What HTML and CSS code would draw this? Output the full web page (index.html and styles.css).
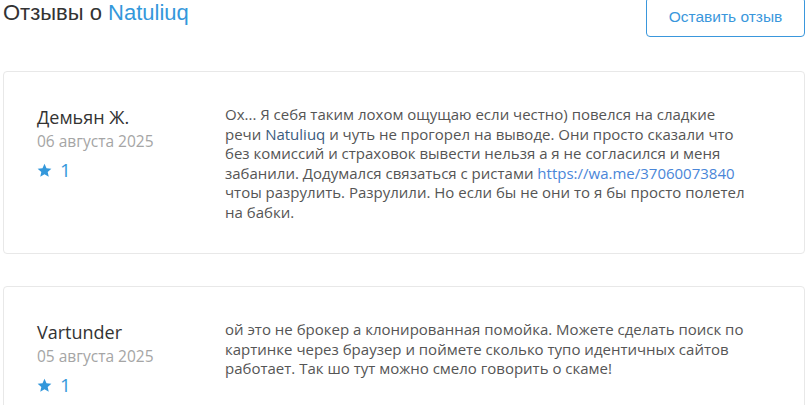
FILE: index.html
```html
<!DOCTYPE html>
<html lang="ru">
<head>
<meta charset="utf-8">
<link rel="stylesheet" href="styles.css">
</head>
<body>
<div class="page">
  <div class="header">
    <h1 class="title">Отзывы о <span class="brand">Natuliuq</span></h1>
    <button class="btn">Оставить отзыв</button>
  </div>
  <div class="review">
    <div class="meta">
      <div class="name">Демьян Ж.</div>
      <div class="date">06 августа 2025</div>
      <div class="rating">
        <svg class="star" viewBox="0 0 24 24" width="15" height="15"><path d="M12 1.2l3.2 7.1 7.8.8-5.9 5.2 1.7 7.7L12 18.1 5.2 22l1.7-7.7L1 9.1l7.8-.8z" fill="#3498db"/></svg>
        <span class="score">1</span>
      </div>
    </div>
    <div class="text">Ох... Я себя таким лохом ощущаю если честно) повелся на сладкие речи <span class="mention">Natuliuq</span> и чуть не прогорел на выводе. Они просто сказали что без комиссий и страховок вывести нельзя а я не согласился и меня забанили. Додумался связаться с ристами <a class="link" href="#">https://wa.me/37060073840</a> чтоы разрулить. Разрулили. Но если бы не они то я бы просто полетел на бабки.</div>
  </div>
  <div class="review">
    <div class="meta">
      <div class="name">Vartunder</div>
      <div class="date">05 августа 2025</div>
      <div class="rating">
        <svg class="star" viewBox="0 0 24 24" width="15" height="15"><path d="M12 1.2l3.2 7.1 7.8.8-5.9 5.2 1.7 7.7L12 18.1 5.2 22l1.7-7.7L1 9.1l7.8-.8z" fill="#3498db"/></svg>
        <span class="score">1</span>
      </div>
    </div>
    <div class="text">ой это не брокер а клонированная помойка. Можете сделать поиск по картинке через браузер и поймете сколько тупо идентичных сайтов работает. Так шо тут можно смело говорить о скаме!</div>
  </div>
</div>
</body>
</html>
```
FILE: styles.css
```css
* { box-sizing: border-box; }
html, body { margin: 0; padding: 0; background: #fff; }
.page {
  padding: 0 1px 0 3px;
  margin-top: -3px;
}
.header {
  display: flex;
  justify-content: space-between;
  align-items: flex-start;
  margin-bottom: 34px;
}
.title {
  margin: 0;
  padding-top: 5px;
  font-family: "Liberation Sans", Arial, sans-serif;
  font-weight: normal;
  font-size: 22px;
  line-height: 22px;
  color: #333;
}
.brand { color: #3498db; }
.btn {
  height: 40px;
  width: 159px;
  background: #fff;
  border: 1px solid #3a97dc;
  border-radius: 4px;
  color: #3a97dc;
  font-family: "Liberation Sans", Arial, sans-serif;
  font-size: 15.5px;
  padding: 0;
}
.review {
  display: grid;
  grid-template-columns: 154px 1fr;
  gap: 34px;
  border: 1px solid #e8e8e8;
  border-radius: 4px;
  padding: 33px 53px 31px 33px;
  margin-bottom: 32px;
}
.name {
  font-family: "Open Sans", sans-serif;
  font-size: 18px;
  line-height: 24px;
  color: #333;
  white-space: nowrap;
}
.date {
  font-family: "Open Sans", sans-serif;
  font-size: 15.5px;
  line-height: 24px;
  color: #a5a5a5;
  white-space: nowrap;
}
.rating {
  display: flex;
  align-items: center;
  gap: 8px;
  margin-top: 6px;
}
.score {
  font-family: "Open Sans", sans-serif;
  font-size: 19px;
  font-weight: 500;
  line-height: 22px;
  color: #3498db;
}
.text {
  font-family: "Open Sans", sans-serif;
  font-size: 15px;
  line-height: 19.5px;
  color: #555;
}
.mention { color: #3b5b7d; }
.link { color: #4a86d8; text-decoration: none; }
```
